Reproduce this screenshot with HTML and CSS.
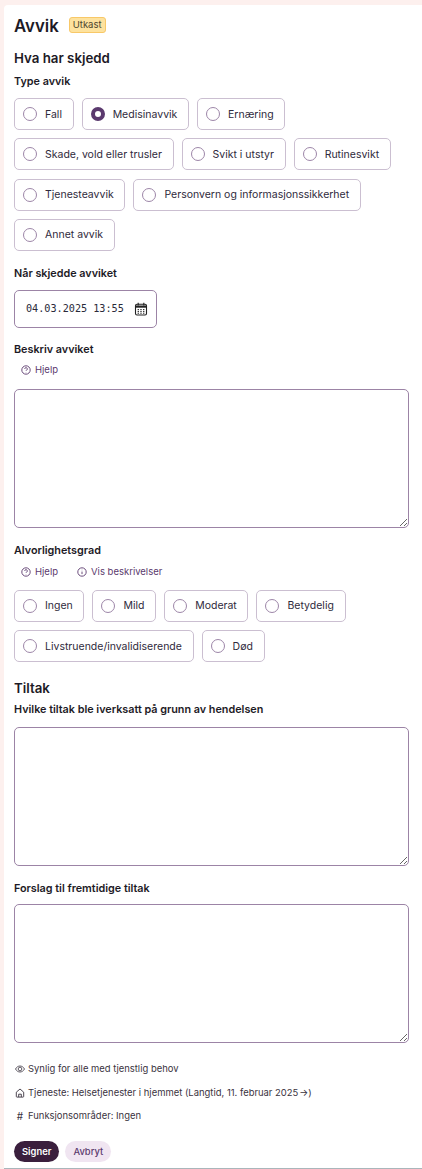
FILE: index.html
```html
<!DOCTYPE html>
<html lang="no">
<head>
<meta charset="utf-8">
<title>Avvik</title>
<link rel="stylesheet" href="styles.css">
</head>
<body>
<main class="card">
  <header class="title-row">
    <h1>Avvik</h1>
    <span class="badge">Utkast</span>
  </header>
  <h2 class="sec-first">Hva har skjedd</h2>
  <div class="label l-type">Type avvik</div>
  <div class="chips">
    <div class="chip"><span class="radio"></span>Fall</div>
    <div class="chip"><span class="radio on"></span>Medisinavvik</div>
    <div class="chip"><span class="radio"></span>Ernæring</div>
    <div class="chip"><span class="radio"></span>Skade, vold eller trusler</div>
    <div class="chip"><span class="radio"></span>Svikt i utstyr</div>
    <div class="chip"><span class="radio"></span>Rutinesvikt</div>
    <div class="chip"><span class="radio"></span>Tjenesteavvik</div>
    <div class="chip"><span class="radio"></span>Personvern og informasjonssikkerhet</div>
    <div class="chip"><span class="radio"></span>Annet avvik</div>
  </div>
  <div class="label l-when">Når skjedde avviket</div>
  <div class="date">
    <span class="date-text">04.03.2025 13:55</span>
    <svg class="cal" width="14" height="14" viewBox="0 0 14 14" fill="none" stroke="#222" stroke-width="1.1">
      <rect x="1.5" y="2.2" width="11" height="10.8" rx="1.5"/>
      <path d="M1.5 4.6h11" stroke-width="2.2"/>
      <path d="M4.2 .8v2.6M9.8 .8v2.6" />
      <path d="M3.6 7.6h1.4M6.3 7.6h1.4M9 7.6h1.4M3.6 9.4h1.4M6.3 9.4h1.4M9 9.4h1.4M3.6 11.2h1.4M6.3 11.2h1.4M9 11.2h1.4" stroke-width="1"/>
    </svg>
  </div>
  <div class="label l-desc">Beskriv avviket</div>
  <div class="links">
    <span class="link">
      <svg width="10" height="10" viewBox="0 0 10 10" fill="none" stroke="#5b3a6e" stroke-width=".9"><circle cx="5" cy="5" r="4.2"/><path d="M3.7 3.9a1.3 1.3 0 1 1 1.9 1.2c-.4.2-.6.4-.6.8M5 7.1v.3"/></svg>
      Hjelp
    </span>
  </div>
  <textarea class="area a-desc"></textarea>
  <div class="label l-sev">Alvorlighetsgrad</div>
  <div class="links links-sev">
    <span class="link">
      <svg width="10" height="10" viewBox="0 0 10 10" fill="none" stroke="#5b3a6e" stroke-width=".9"><circle cx="5" cy="5" r="4.2"/><path d="M3.7 3.9a1.3 1.3 0 1 1 1.9 1.2c-.4.2-.6.4-.6.8M5 7.1v.3"/></svg>
      Hjelp
    </span>
    <span class="link">
      <svg width="10" height="10" viewBox="0 0 10 10" fill="none" stroke="#5b3a6e" stroke-width=".9"><circle cx="5" cy="5" r="4.2"/><path d="M5 4.6v2.5M5 2.8v.4"/></svg>
      Vis beskrivelser
    </span>
  </div>
  <div class="chips c-sev">
    <div class="chip"><span class="radio"></span>Ingen</div>
    <div class="chip"><span class="radio"></span>Mild</div>
    <div class="chip"><span class="radio"></span>Moderat</div>
    <div class="chip"><span class="radio"></span>Betydelig</div>
    <div class="chip"><span class="radio"></span>Livstruende/invalidiserende</div>
    <div class="chip"><span class="radio"></span>Død</div>
  </div>
  <h2 class="sec-tiltak">Tiltak</h2>
  <div class="label l-hvilke">Hvilke tiltak ble iverksatt på grunn av hendelsen</div>
  <textarea class="area a-tiltak"></textarea>
  <div class="label l-forslag">Forslag til fremtidige tiltak</div>
  <textarea class="area a-forslag"></textarea>
  <div class="meta m-first">
    <svg width="10" height="10" viewBox="0 0 10 10" fill="none" stroke="#3a3340" stroke-width=".8"><path d="M.5 5C1.6 3 3.2 2 5 2s3.4 1 4.5 3C8.4 7 6.8 8 5 8S1.6 7 .5 5z"/><circle cx="5" cy="5" r="1.8"/></svg>
    Synlig for alle med tjenstlig behov
  </div>
  <div class="meta m-second">
    <svg width="10" height="10" viewBox="0 0 10 10" fill="none" stroke="#3a3340" stroke-width=".9"><path d="M1.3 4.2 5 1l3.7 3.2v4.2a.7.7 0 0 1-.7.7H2a.7.7 0 0 1-.7-.7z"/><path d="M3.7 9V6.2h2.6V9"/></svg>
    <span>Tjeneste: Helsetjenester i hjemmet (Langtid, 11. februar 2025<span class="arrow">→</span>)</span>
  </div>
  <div class="meta m-third">
    <span class="hash">#</span>
    Funksjonsområder: Ingen
  </div>
  <div class="actions">
    <button class="btn primary">Signer</button>
    <button class="btn ghost">Avbryt</button>
  </div>
</main>
</body>
</html>
```
FILE: styles.css
```css
* { box-sizing: border-box; }
html, body { margin: 0; padding: 0; }
body {
  background: #fdf0ee;
  font-family: Inter, "Noto Sans", sans-serif;
  color: #1d1a26;
  width: 422px;
  height: 1169px;
  overflow: hidden;
  padding: 5px 0 0 4px;
}
.card {
  background: #fff;
  border-radius: 4px 0 0 0;
  height: 1164px;
  padding: 10px 13px 0 10px;
  border-bottom: 1px solid #a9b6bb;
}
.title-row { display: flex; align-items: center; gap: 10px; height: 22px; }
h1 { margin: 0; font-size: 16.8px; font-weight: 600; line-height: 22px; }
.badge {
  background: #fde29e;
  border: 1px solid #f8c868;
  border-radius: 3px;
  color: #4d4630;
  font-size: 9.5px;
  line-height: 14px;
  height: 16px;
  padding: 0 3px;
  margin-top: -3px;
}
h2 { margin: 0; font-size: 13.3px; font-weight: 600; line-height: 18px; }
.sec-first { margin-top: 12px; }
.sec-tiltak { margin-top: 16.7px; }
.label { font-size: 10.8px; font-weight: 600; line-height: 14px; }
.l-type { margin-top: 8px; }
.l-when { margin-top: 16.1px; }
.l-desc { margin-top: 15px; }
.l-sev { margin-top: 16px; }
.l-hvilke { margin-top: 6px; }
.l-forslag { margin-top: 16px; }
.chips { display: flex; flex-wrap: wrap; gap: 8.3px 8px; margin-top: 9px; }
.c-sev { margin-top: 11px; }
.chip {
  display: flex;
  align-items: center;
  height: 32px;
  padding: 0 10.7px 0 8px;
  border: 1px solid #cbbfd1;
  border-radius: 5px;
  font-size: 10.5px;
  color: #2f2a3c;
  background: #fff;
}
.radio {
  width: 14px;
  height: 14px;
  border: 1px solid #9d86a8;
  border-radius: 50%;
  margin-right: 8px;
  flex: none;
}
.radio.on { border: 4px solid #5b3a6e; }
.date {
  display: flex;
  align-items: center;
  gap: 10px;
  width: 143px;
  height: 38px;
  margin-top: 9px;
  padding: 0 9px 0 11px;
  border: 1px solid #9c84a6;
  border-radius: 5px;
}
.date-text { font-family: "DejaVu Sans Mono", monospace; font-size: 10.17px; color: #2a2a3a; white-space: nowrap; }
.cal { flex: none; }
.links { display: flex; gap: 19px; margin: 6px 0 0 7px; height: 14px; }
.links-sev { margin-top: 7px; }
.link { display: flex; align-items: center; gap: 4px; font-size: 9.5px; color: #5b3a6e; line-height: 14px; }
.area {
  display: block;
  width: 395px;
  height: 139px;
  margin: 0;
  border: 1px solid #9c84a6;
  border-radius: 5px;
  background: #fff;
  outline: none;
  resize: both;
}
.a-desc { margin-top: 12px; }
.a-tiltak { margin-top: 10px; }
.a-forslag { margin-top: 8px; }
.meta { display: flex; align-items: center; gap: 3px; font-size: 9.45px; color: #3a3340; line-height: 12px; margin-left: 1px; }
.m-first { margin-top: 20px; }
.m-second { margin-top: 12px; }
.m-third { margin-top: 11px; }
.hash { width: 10px; text-align: center; font-size: 10px; }
.arrow { margin-left: 1px; }
.actions { display: flex; gap: 6px; margin-top: 19px; }
.btn {
  border: 0;
  height: 21px;
  border-radius: 11px;
  font-family: inherit;
  font-size: 9.4px;
  padding: 0 8px;
}
.primary { background: #3a1f3d; color: #fff; font-weight: 600; }
.ghost { background: #f0e5f1; color: #5b3a6e; font-weight: 500; }
```
